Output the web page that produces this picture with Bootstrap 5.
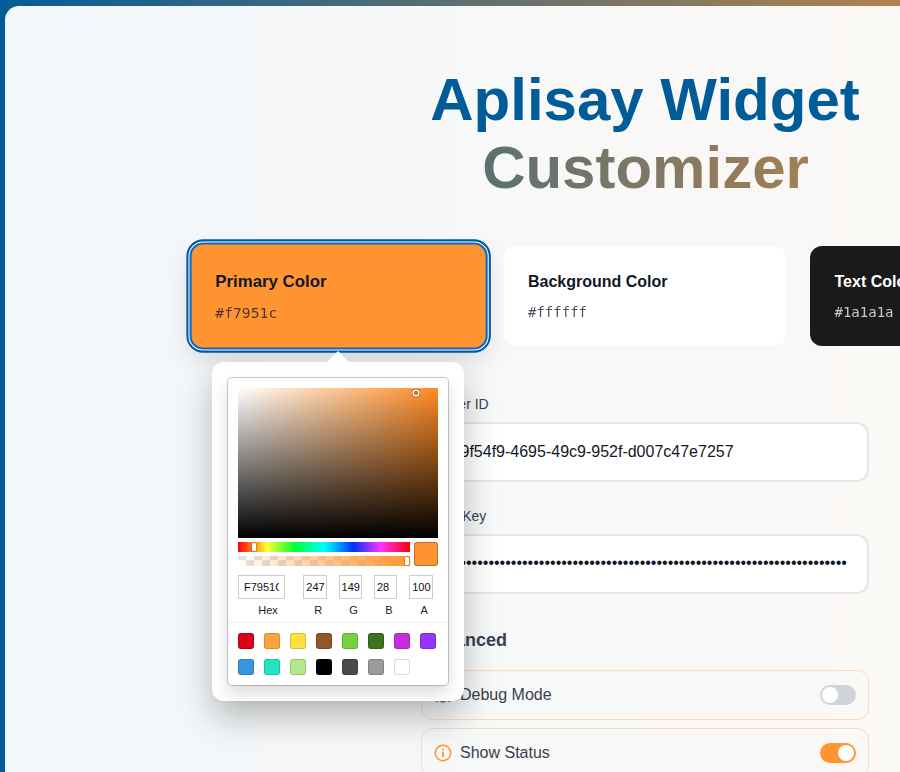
<!DOCTYPE html>
<html lang="en">
<head>
<meta charset="utf-8">
<meta name="viewport" content="width=device-width, initial-scale=1">
<title>Aplisay Widget Customizer</title>
<link href="https://cdn.jsdelivr.net/npm/bootstrap@5.3.0/dist/css/bootstrap.min.css" rel="stylesheet">
<style>
body{font-family:"Liberation Sans",Arial,sans-serif;overflow:hidden;height:772px;color:#374151}
.stage{width:1290px;height:772px;padding:6px 5px 0;background:linear-gradient(90deg,#055c96,#fb922f)}
.panel{border-radius:14px 14px 0 0;background:rgba(255,255,255,.95);height:766px;padding:60px 48px 0}
.headline{font-size:60px;font-weight:700;line-height:67.5px;color:#005b99;margin:0 0 45px}
.headline span{display:block;padding-left:1px;background:linear-gradient(90deg,#005b99,#ff9430);-webkit-background-clip:text;background-clip:text;color:transparent}
.swatches{width:894px;display:grid;grid-template-columns:repeat(3,282px);gap:24px}
.tile{height:100px;border-radius:12px;padding:24px;background:#fff;color:#111827}
.tile-name{font-size:16px;font-weight:700;line-height:24px}
.tile-hex{font-family:"DejaVu Sans Mono",monospace;font-size:14px;line-height:20px;margin-top:8px;opacity:.75}
.tile-dark{background:#1a1a1a;color:#fff;padding-left:24.5px}
.tile-primary{background:#ff9430;transform:translateX(-.4px) scale(1.05);box-shadow:0 0 0 2px #fff,0 0 0 4px #005b99,0 10px 24px rgba(0,0,0,.13);outline:2px solid #0969ce;outline-offset:-1px;padding-left:23.6px}
.settings{width:448px;margin-top:48px}
.settings label{font-size:14px;line-height:20px;display:block;margin-bottom:8px}
.settings .form-control{height:60px;border:2px solid #e5e7eb;border-radius:12px;padding:0 20px 0 20.6px;font-size:16px;color:#111827;background:#fff;margin-bottom:24px}
.dots{padding-bottom:2px}
.settings h2{font-size:18px;font-weight:700;line-height:28px;margin:32px 0 16px}
.option{height:50px;border:1px solid #fddcbc;border-radius:12px;padding:0 12px;margin-bottom:8px;font-size:16px}
.toggle{width:36px;height:20px;border-radius:10px;background:#d1d5db;padding:2px}
.toggle i{display:block;width:16px;height:16px;border-radius:50%;background:#fff}
.toggle.on{background:#ff9430}
.toggle.on i{margin-left:16px}
.popup{position:absolute;left:212px;top:362px;width:252px;height:339px;background:#fff;border-radius:12px;padding:16px;box-shadow:0 16px 34px rgba(0,0,0,.26);z-index:5}
.popup:before{content:"";position:absolute;left:114px;top:-11px;border:solid transparent;border-width:0 12px 12px;border-bottom-color:#fff}
.sketch{width:220px;height:307px;border-radius:4px;padding:10px 10px 0;background:#fff;box-shadow:0 0 0 1px rgba(0,0,0,.2),0 8px 16px rgba(0,0,0,.15);color:#222}
.shade{height:150px;background:linear-gradient(to top,#000,transparent),linear-gradient(to right,#fff,#ff8a22);position:relative}
.shade i{position:absolute;left:176px;top:3px;width:4px;height:4px;border-radius:50%;box-shadow:0 0 0 1.5px #fff,inset 0 0 1px 1px rgba(0,0,0,.3),0 0 1px 2px rgba(0,0,0,.4)}
.sliders{gap:4px;padding-top:4px}
.strip{height:10px;width:172px;position:relative}
.strip i{position:absolute;top:1px;width:4px;height:8px;border-radius:1px;background:#fff;box-shadow:0 0 2px rgba(0,0,0,.6)}
.hue{background:linear-gradient(to right,#f00,#ff3 17%,#0f3 33%,#0ff 50%,#03f 67%,#f3f 83%,#f00)}
.alpha{margin-top:4px;background:linear-gradient(to right,rgba(255,148,48,0),#ff9430),repeating-conic-gradient(#fff 0 25%,#e3e3e3 0 50%) 0 -4px/16px 16px}
.current{width:24px;height:24px;border-radius:3px;background:#ff9430;box-shadow:inset 0 0 0 1px rgba(0,0,0,.25)}
.fields{display:grid;grid-template-columns:60px repeat(4,30px);column-gap:5.3px;padding-top:9px;margin-right:-10px;height:56px}
.fields div{font-size:11px;line-height:22px;text-align:center}
.fields span{display:block;width:23.5px;height:24px;border:1px solid #ccc;line-height:22px;text-align:left;padding-left:2px;overflow:hidden;white-space:nowrap;color:#111}
.fields .hexcell span{width:47px;padding:0 5px}
.fields .hexcell b{display:block;overflow:hidden;font-weight:400}
.presets{margin:0 -10px;padding:10px 0 0 10px;border-top:1px solid #eee;gap:10px;height:64px;align-content:flex-start}
.presets i{width:16px;height:16px;border-radius:3px;box-shadow:inset 0 0 0 1px rgba(0,0,0,.15)}
</style>
<script src="https://cdn.jsdelivr.net/npm/bootstrap@5.3.0/dist/js/bootstrap.bundle.min.js"></script>
</head>
<body>
<main class="stage">
<div class="panel">
<h1 class="headline text-center">Aplisay Widget<span>Customizer</span></h1>
<section class="swatches mx-auto">
<div class="tile tile-primary"><div class="tile-name">Primary Color</div><div class="tile-hex">#f7951c</div></div>
<div class="tile"><div class="tile-name">Background Color</div><div class="tile-hex">#ffffff</div></div>
<div class="tile tile-dark"><div class="tile-name">Text Color</div><div class="tile-hex">#1a1a1a</div></div>
</section>
<section class="settings mx-auto">
<label>Listener ID</label>
<div class="form-control d-flex align-items-center"><span>cb9f54f9-4695-49c9-952f-d007c47e7257</span></div>
<label>Room Key</label>
<div class="form-control d-flex align-items-center overflow-hidden"><span class="dots">••••••••••••••••••••••••••••••••••••••••••••••••••••••••••••••••••••••••</span></div>
<h2>Advanced</h2>
<div class="option d-flex align-items-center justify-content-between"><span class="d-flex align-items-center gap-2"><svg width="18" height="18" viewBox="0 0 18 18" fill="none" stroke="#6b7280" stroke-width="1.5"><path d="M2 4l3 3M16 4l-3 3M1 10h4M17 10h-4M2 16l3-2M16 16l-3-2"/><rect x="5" y="5" width="8" height="11" rx="4"/></svg>Debug Mode</span><span class="toggle"><i></i></span></div>
<div class="option d-flex align-items-center justify-content-between"><span class="d-flex align-items-center gap-2"><svg width="18" height="18" viewBox="0 0 18 18" fill="none" stroke="#ff9430" stroke-width="1.5"><circle cx="9" cy="9" r="7.7"/><path d="M9 7.7V13M9 4.7v1.8" stroke-width="1.8"/></svg>Show Status</span><span class="toggle on"><i></i></span></div>
</section>
</div>
</main>
<div class="popup">
<div class="sketch">
<div class="shade"><i></i></div>
<div class="sliders d-flex"><div><div class="strip hue"><i style="left:14px"></i></div><div class="strip alpha"><i style="left:167px"></i></div></div><div class="current"></div></div>
<div class="fields"><div class="hexcell"><span><b>F7951C</b></span>Hex</div><div><span>247</span>R</div><div><span>149</span>G</div><div><span>28</span>B</div><div><span>100</span>A</div></div>
<div class="presets d-flex flex-wrap" id="presets"></div>
</div>
</div>
<script>
["#dc0019","#ffa336","#fbe23f","#90572b","#75d13f","#3a731a","#c42fdc","#9338fb","#3995e0","#25e4c4","#b4e88d","#000000","#4a4a4a","#9b9b9b","#ffffff"].forEach(function(c){
var s=document.createElement("i");s.style.background=c;document.getElementById("presets").appendChild(s);
});
</script>
</body>
</html>
